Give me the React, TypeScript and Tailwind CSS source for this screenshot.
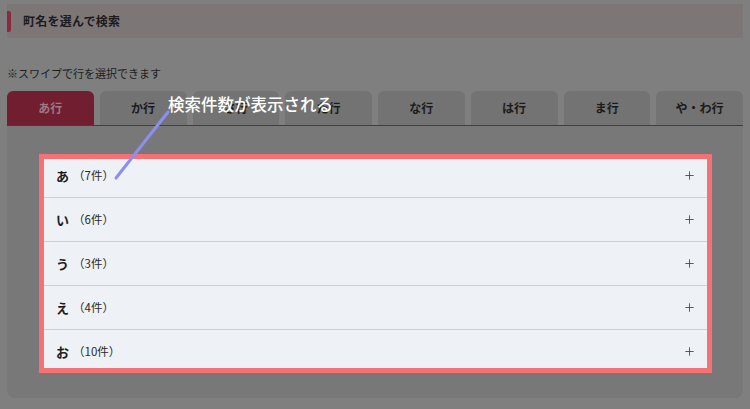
import { Plus } from "lucide-react";

const tabs = ["あ行", "か行", "さ行", "た行", "な行", "は行", "ま行", "や・わ行"];

const rows = [
    { kana: "あ", count: 7 },
    { kana: "い", count: 6 },
    { kana: "う", count: 3 },
    { kana: "え", count: 4 },
    { kana: "お", count: 10 },
];

export default function App() {
    return (
        <div
            className="relative w-[750px] h-[409px] overflow-hidden bg-[#7f7f7f] px-[7px] pt-[4px]"
            style={{ fontFamily: '"Noto Sans CJK JP", "Noto Sans", sans-serif' }}
        >
            {/* Section title */}
            <div className="h-[34px] bg-[#7d7677] flex items-center">
                <div className="w-[4px] h-[21px] rounded-r-[2px] bg-[#8d2840]" />
                <h2 className="ml-[12px] text-[12px] font-bold text-[#1c1c1c] tracking-[0.02em]">町名を選んで検索</h2>
            </div>

            <p className="mt-[27px] text-[11px] leading-[16px] text-[#1e1e1e]">※スワイプで行を選択できます</p>

            {/* Row tabs */}
            <div className="mt-[10px] flex gap-[6px] border-b border-[#7a2236]">
                {tabs.map((t, i) => (
                    <div
                        key={t}
                        className={
                            i === 0
                                ? "flex-1 h-[34px] rounded-t-[6px] bg-[#721e31] flex items-center justify-center text-[12px] font-bold text-[#9c7880]"
                                : "flex-1 h-[34px] rounded-t-[6px] bg-[#737373] flex items-center justify-center text-[12px] font-bold text-[#1c1c1c]"
                        }
                    >
                        {t}
                    </div>
                ))}
            </div>

            {/* Tab panel */}
            <div className="h-[272px] bg-[#787878] rounded-b-[8px] pt-[28px] pl-[32px]">
                <div className="relative w-[673px] bg-[#eef1f5]">
                    {rows.map((r, i) => (
                        <div
                            key={r.kana}
                            className={
                                i < rows.length - 1
                                    ? "h-[44px] flex items-center pl-[17px] pr-[16px] border-b border-[#cfcfd3]"
                                    : "h-[43px] flex items-center pl-[17px] pr-[16px]"
                            }
                        >
                            <span className="text-[13px] font-bold text-[#1c1c1c]">{r.kana}</span>
                            <span className="ml-[4px] text-[11.5px] text-[#2a2a2a]">（{r.count}件）</span>
                            <Plus className="ml-auto w-[13px] h-[13px] text-[#444]" strokeWidth={1.6} />
                        </div>
                    ))}
                    <div className="absolute inset-0 border-[5px] border-[#f47174] pointer-events-none" />
                </div>
            </div>

            {/* Annotation */}
            <svg className="absolute left-0 top-0 pointer-events-none" width="750" height="409">
                <line x1="116" y1="178" x2="168" y2="112" stroke="#8b8ff2" strokeWidth="3" strokeLinecap="round" />
            </svg>
            <div className="absolute left-[168px] top-[93px] text-[16.5px] leading-[22px] font-medium text-white whitespace-nowrap">
                検索件数が表示される
            </div>
        </div>
    );
}
